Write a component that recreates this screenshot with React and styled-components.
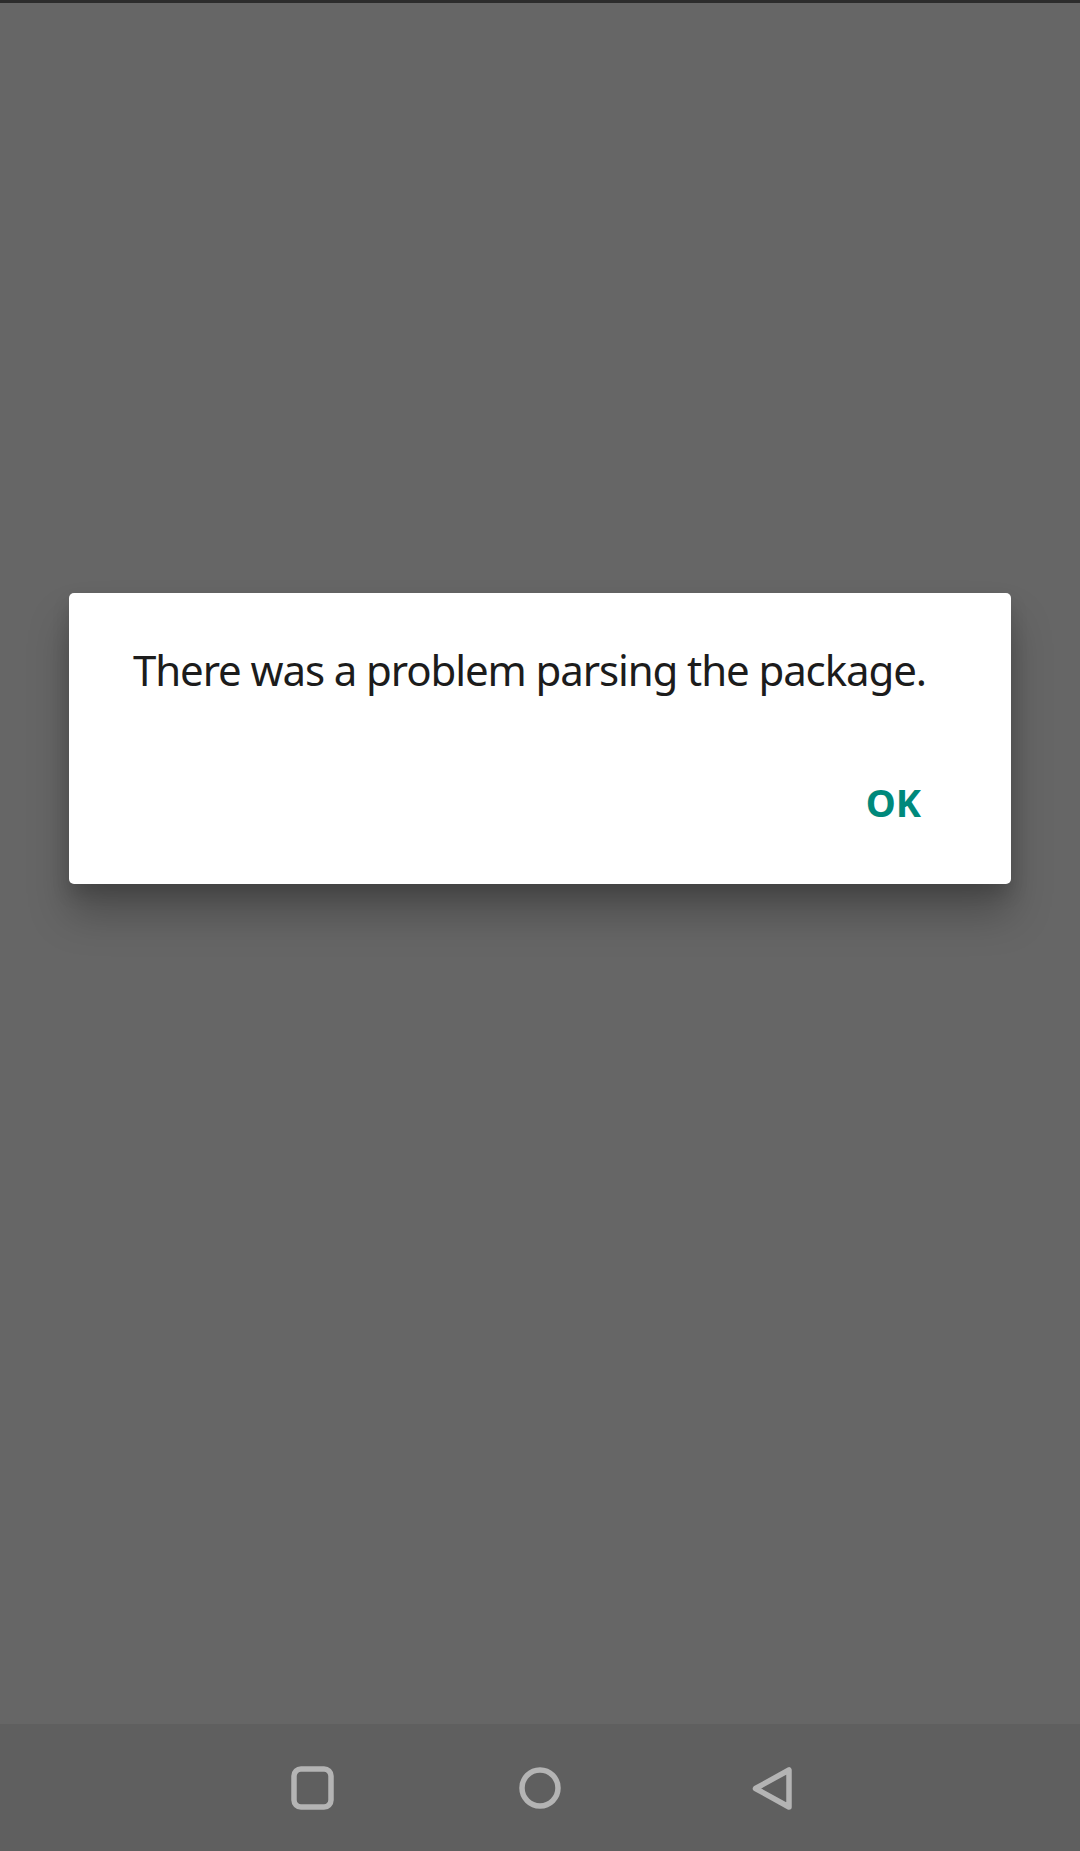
import React from 'react';
import styled, { createGlobalStyle } from 'styled-components';

const GlobalStyle = createGlobalStyle`
  html, body {
    margin: 0;
    padding: 0;
    background: #666666;
  }
  body {
    font-family: "Noto Sans", "Open Sans", sans-serif;
  }
`;

const Screen = styled.div`
  width: 1080px;
  height: 1851px;
  display: flex;
  flex-direction: column;
  background: #666666;
  overflow: hidden;
`;

const TopEdge = styled.div`
  height: 3px;
  background: #2c2c2c;
  flex-shrink: 0;
`;

const Scrim = styled.div`
  flex: 1;
  display: flex;
  flex-direction: column;
  align-items: center;
  padding-top: 590px;
`;

const Dialog = styled.div`
  width: 942px;
  box-sizing: border-box;
  background: #ffffff;
  border-radius: 5px;
  padding: 48px 74px 53px 64px;
  box-shadow: 0 30px 40px rgba(0, 0, 0, 0.25), 0 10px 18px rgba(0, 0, 0, 0.14);
`;

const Message = styled.p`
  margin: 0;
  font-size: 42px;
  line-height: 57px;
  color: #1c1c1c;
  letter-spacing: -1.1px;
  white-space: nowrap;
`;

const Actions = styled.div`
  display: flex;
  justify-content: flex-end;
  margin-top: 75px;
`;

const TextButton = styled.button`
  border: none;
  background: transparent;
  padding: 10px 16px;
  font-family: inherit;
  font-size: 38px;
  line-height: 38px;
  font-weight: 700;
  color: #00897b;
  cursor: pointer;
`;

const NavBar = styled.nav`
  height: 127px;
  flex-shrink: 0;
  background: #5f5f5f;
  display: flex;
  justify-content: center;
  align-items: center;
`;

const NavButton = styled.button`
  width: 228px;
  height: 127px;
  border: none;
  background: transparent;
  padding: 0;
  display: flex;
  align-items: center;
  justify-content: center;
  color: #b4b4b4;
`;

const RecentsIcon = () => (
  <svg width="48" height="48" viewBox="0 0 48 48" fill="none">
    <rect x="6" y="5" width="37" height="38" rx="7" stroke="currentColor" strokeWidth="5.5" />
  </svg>
);

const HomeIcon = () => (
  <svg width="48" height="48" viewBox="0 0 48 48" fill="none">
    <circle cx="24" cy="24" r="18" stroke="currentColor" strokeWidth="5.5" />
  </svg>
);

const BackIcon = () => (
  <svg width="48" height="48" viewBox="0 0 48 48" fill="none">
    <path
      d="M45 6 L45 43 L11.5 24.5 Z"
      stroke="currentColor"
      strokeWidth="5.5"
      strokeLinejoin="round"
    />
  </svg>
);

export default function App() {
  return (
    <Screen>
      <GlobalStyle />
      <TopEdge />
      <Scrim>
        <Dialog role="alertdialog">
          <Message>There was a problem parsing the package.</Message>
          <Actions>
            <TextButton>OK</TextButton>
          </Actions>
        </Dialog>
      </Scrim>
      <NavBar>
        <NavButton aria-label="Recents">
          <RecentsIcon />
        </NavButton>
        <NavButton aria-label="Home">
          <HomeIcon />
        </NavButton>
        <NavButton aria-label="Back">
          <BackIcon />
        </NavButton>
      </NavBar>
    </Screen>
  );
}
